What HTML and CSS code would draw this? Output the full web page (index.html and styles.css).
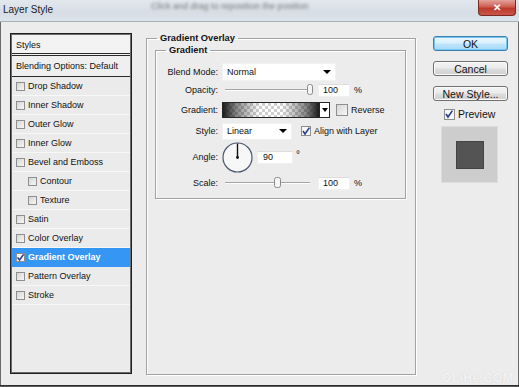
FILE: index.html
```html
<!DOCTYPE html>
<html lang="en">
<head>
    <meta charset="UTF-8">
    <title>Layer Style</title>
    <link rel="stylesheet" href="styles.css">
</head>
<body>
    <div class="window">
        <div class="titlebar">
            <span class="title">Layer Style</span>
            <span class="hint">Click and drag to reposition the position</span>
            <span class="close">✕</span>
        </div>
        <div class="content">
            <div class="styles-list">
                <div class="list-head">Styles</div>
                <div class="list-blend">Blending Options: Default</div>
                <div class="item"><span class="cb"></span>Drop Shadow</div>
                <div class="item"><span class="cb"></span>Inner Shadow</div>
                <div class="item"><span class="cb"></span>Outer Glow</div>
                <div class="item"><span class="cb"></span>Inner Glow</div>
                <div class="item"><span class="cb"></span>Bevel and Emboss</div>
                <div class="item sub"><span class="cb"></span>Contour</div>
                <div class="item sub"><span class="cb"></span>Texture</div>
                <div class="item"><span class="cb"></span>Satin</div>
                <div class="item"><span class="cb"></span>Color Overlay</div>
                <div class="item selected">
                    <span class="cb checked"><svg viewBox="0 0 9 9" width="9" height="9"><path d="M1.6 4.4 L3.6 7 L7.6 1.4" fill="none" stroke="#2b3d86" stroke-width="1.6"/></svg></span>Gradient Overlay
                </div>
                <div class="item"><span class="cb"></span>Pattern Overlay</div>
                <div class="item"><span class="cb"></span>Stroke</div>
            </div>

            <fieldset class="group outer">
                <legend>Gradient Overlay</legend>
                <fieldset class="group inner">
                    <legend>Gradient</legend>
                    <div class="form">
                        <label>Blend Mode:</label>
                        <div class="ctrl">
                            <div class="select blend"><span>Normal</span><i class="arrow"></i></div>
                        </div>

                        <label>Opacity:</label>
                        <div class="ctrl">
                            <svg class="slider" width="90" height="14" viewBox="0 0 90 14">
                                <line x1="0" y1="6.5" x2="86" y2="6.5" stroke="#a4a4a4"/>
                                <line x1="0" y1="7.5" x2="86" y2="7.5" stroke="#fff"/>
                                <rect x="82.5" y="1.5" width="5" height="10" rx="2" fill="#f4f4f4" stroke="#8a8a8a"/>
                            </svg>
                            <div class="field num">100</div>
                            <span class="unit">%</span>
                        </div>

                        <label>Gradient:</label>
                        <div class="ctrl">
                            <div class="swatch"></div>
                            <div class="swatch-arrow"><i class="arrow"></i></div>
                            <span class="cb big"></span>
                            <span class="cb-label">Reverse</span>
                        </div>

                        <label>Style:</label>
                        <div class="ctrl">
                            <div class="select style"><span>Linear</span><i class="arrow"></i></div>
                            <span class="cb align checked"><svg viewBox="0 0 10 10" width="10" height="10"><path d="M2 5 L4 8 L8.4 1.6" fill="none" stroke="#2b3d86" stroke-width="1.6"/></svg></span>
                            <span class="cb-label">Align with Layer</span>
                        </div>

                        <label>Angle:</label>
                        <div class="ctrl">
                            <svg class="dial" width="31" height="31" viewBox="0 0 31 31">
                                <circle cx="15.5" cy="15.5" r="14.5" fill="#f7f7f7" stroke="#4a5670" stroke-width="1.2"/>
                                <line x1="15.5" y1="15.5" x2="15.5" y2="1.5" stroke="#111" stroke-width="1.4"/>
                                <circle cx="15.5" cy="15.5" r="1.4" fill="#111"/>
                            </svg>
                            <div class="field angle">90</div>
                            <span class="deg">°</span>
                        </div>

                        <label>Scale:</label>
                        <div class="ctrl">
                            <svg class="slider" width="85" height="14" viewBox="0 0 85 14">
                                <line x1="0" y1="6.5" x2="85" y2="6.5" stroke="#a4a4a4"/>
                                <line x1="0" y1="7.5" x2="85" y2="7.5" stroke="#fff"/>
                                <rect x="49.5" y="1.5" width="6" height="10" rx="2" fill="#f4f4f4" stroke="#8a8a8a"/>
                            </svg>
                            <div class="field num scale">100</div>
                            <span class="unit">%</span>
                        </div>
                    </div>
                </fieldset>
            </fieldset>

            <div class="actions">
                <button class="btn primary">OK</button>
                <button class="btn">Cancel</button>
                <button class="btn">New Style...</button>
                <div class="preview-toggle">
                    <span class="cb checked"><svg viewBox="0 0 10 10" width="10" height="10"><path d="M2 5 L4 8 L8.4 1.6" fill="none" stroke="#2b3d86" stroke-width="1.6"/></svg></span>
                    <span>Preview</span>
                </div>
                <div class="preview"><div class="preview-square"></div></div>
            </div>
        </div>
        <div class="watermark">OLiHe.COM</div>
    </div>
</body>
</html>
```

FILE: styles.css
```css
* {
    box-sizing: border-box;
}
html, body {
    margin: 0;
}
body {
    width: 519px;
    height: 387px;
    overflow: hidden;
    background: #5a5a5a;
    font-family: "Liberation Sans", Arial, sans-serif;
    font-size: 9px;
    color: #111;
}

.window {
    position: relative;
    height: 386px;
    background: #ececec;
    border-bottom: 1px solid #2e2e2e;
}

/* title bar */
.titlebar {
    height: 22px;
    display: flex;
    align-items: flex-start;
    background: linear-gradient(#e3e8ee, #d6dde5 60%, #dde3ea);
    border-bottom: 1px solid #a7afb9;
}
.title {
    padding: 4px 0 0 3px;
    font-size: 10px;
    color: #1b1b1b;
}
.hint {
    margin: 1px 0 0 98px;
    font-size: 9px;
    color: #777;
    filter: blur(1.4px);
}
.close {
    margin-left: auto;
    margin-right: 3px;
    width: 38px;
    height: 16px;
    display: flex;
    align-items: center;
    justify-content: center;
    font-size: 10px;
    font-weight: bold;
    color: #fff;
    background: linear-gradient(#e3a39b, #cf5d4f 45%, #bb3a2b 55%, #c8564a);
    border: 1px solid #7a2a22;
    border-top: none;
    border-radius: 0 0 4px 4px;
}

.content {
    display: flex;
    align-items: flex-start;
    height: 363px;
    padding: 11px 10px 0 9px;
    border-left: 1px solid #6a6a6a;
    border-right: 1px solid #6a6a6a;
    background: #ececec;
}

/* styles list */
.styles-list {
    width: 122px;
    height: 341px;
    flex: none;
    border: 1px solid #1f1f1f;
    box-shadow: inset 1px 1px 0 #6d6d6d, inset -1px -1px 0 #6d6d6d;
    background: #ebebeb;
    padding: 1px;
}
.list-head {
    height: 21px;
    padding: 5px 0 0 4px;
    background: #f3f3f3;
    border-bottom: 3px double #2a2a2a;
}
.list-blend {
    height: 21px;
    padding: 5px 0 0 4px;
    background: #efefef;
    border-bottom: 1px solid #2a2a2a;
}
.item {
    height: 19px;
    display: flex;
    align-items: center;
    gap: 3px;
    padding-left: 4px;
    border-bottom: 1px solid #f7f7f7;
}
.item.sub {
    padding-left: 16px;
}
.item.selected {
    background: #3696f3;
    color: #fff;
    font-weight: bold;
    border-bottom-color: #3696f3;
}

.cb {
    width: 9px;
    height: 9px;
    flex: none;
    display: inline-flex;
    border: 1px solid #8e8e8e;
    background: linear-gradient(135deg, #d6d6d6, #f6f6f6);
}
.cb svg {
    display: block;
    margin: -1px;
}
.cb.checked {
    background: #f7f7f7;
}
.cb.big {
    width: 12px;
    height: 12px;
    margin-left: 6px;
}
.cb.align {
    width: 10px;
    height: 10px;
    margin-left: 9px;
}
.cb-label {
    margin-left: 3px;
}

/* group boxes */
.group {
    margin: 0;
    min-width: 0;
    border: 1px solid #a2a2a2;
    box-shadow: 1px 1px 0 #fff, inset 1px 1px 0 #fff;
}
.group legend {
    padding: 0 3px;
    font-weight: bold;
    font-size: 9.3px;
    line-height: 12px;
}
.outer {
    width: 270px;
    height: 343px;
    flex: none;
    margin: -1px 0 0 14px;
    padding: 0 9px 0 8px;
}
.outer > legend {
    margin-left: 2px;
}
.inner {
    padding: 7px 0 5px 0;
}
.inner > legend {
    margin-left: 10px;
}

.form {
    display: grid;
    grid-template-columns: 62px 1fr;
    grid-template-rows: 18px 18px 22px 20px 32px 20px;
    column-gap: 4px;
}
.form label {
    align-self: center;
    text-align: right;
}
.ctrl {
    display: flex;
    align-items: center;
}

.select {
    height: 18px;
    display: flex;
    align-items: center;
    justify-content: space-between;
    padding: 0 4px 0 4px;
    background: #fff;
    border: 1px solid #f2f2f2;
}
.select.blend {
    width: 114px;
}
.select.style {
    width: 70px;
    height: 17px;
}
.arrow {
    width: 0;
    height: 0;
    border-left: 4px solid transparent;
    border-right: 4px solid transparent;
    border-top: 4px solid #000;
}

.slider {
    display: block;
    margin-left: 3px;
    flex: none;
}
.field {
    height: 13px;
    display: flex;
    align-items: center;
    padding-left: 4px;
    background: #fff;
    border: 1px solid #f0f0f0;
    border-top-color: #dcdcdc;
}
.num {
    width: 32px;
    margin-left: 3px;
}
.num.scale {
    margin-left: 8px;
}
.unit {
    margin-left: 4px;
}

.swatch {
    width: 98px;
    height: 16px;
    border: 1px solid #262626;
    background:
        linear-gradient(90deg, #1c1c1c, rgba(40, 40, 40, 0.55) 14%, rgba(0, 0, 0, 0) 38%, rgba(0, 0, 0, 0) 62%, rgba(40, 40, 40, 0.55) 86%, #1c1c1c),
        repeating-conic-gradient(#cfcfcf 0 25%, #fff 0 50%) 0 0 / 6px 6px;
}
.swatch-arrow {
    width: 10px;
    height: 16px;
    display: flex;
    align-items: center;
    justify-content: center;
    background: #fff;
    border: 1px solid #262626;
    border-left: none;
}
.swatch-arrow .arrow {
    border-left-width: 3px;
    border-right-width: 3px;
}

.dial {
    display: block;
    flex: none;
}
.field.angle {
    width: 36px;
    margin-left: 4px;
    padding-left: 5px;
}
.deg {
    margin-left: 3px;
    align-self: flex-start;
    margin-top: 8px;
    font-size: 10px;
}

/* right column */
.actions {
    width: 75px;
    flex: none;
    margin-left: 17px;
    padding-top: 3px;
    display: flex;
    flex-direction: column;
}
.btn {
    height: 15px;
    margin: 0 0 10px 0;
    padding: 0;
    font-family: "Liberation Sans", Arial, sans-serif;
    font-size: 10.5px;
    color: #111;
    border: 1px solid #707070;
    border-radius: 3px;
    background: linear-gradient(#f3f3f3, #ebebeb 48%, #dddddd 52%, #cfcfcf);
    box-shadow: inset 0 0 0 1px #fbfbfb;
}
.btn.primary {
    border-color: #3c7fb1;
    background: linear-gradient(#eaf6fd, #d9f0fc 48%, #bee6fd 52%, #a7d9f5);
    box-shadow: inset 0 0 0 1px #76c6f2;
}
.preview-toggle {
    display: flex;
    align-items: center;
    gap: 3px;
    margin: -3px 0 0 11px;
    font-size: 10.5px;
}
.preview-toggle .cb {
    width: 11px;
    height: 11px;
}
.preview {
    width: 57px;
    height: 57px;
    margin: 6px 0 0 8px;
    display: flex;
    align-items: center;
    justify-content: center;
    background: #cdcdcd;
    border: 1px solid #dcdcdc;
}
.preview-square {
    width: 28px;
    height: 28px;
    background: #545454;
    border: 1px solid #444;
}

.watermark {
    position: absolute;
    right: 6px;
    bottom: 0;
    font-size: 12px;
    font-weight: bold;
    letter-spacing: 0.5px;
    color: rgba(255, 255, 255, 0.75);
    text-shadow: 0 0 1px rgba(180, 180, 180, 0.6);
}
```
